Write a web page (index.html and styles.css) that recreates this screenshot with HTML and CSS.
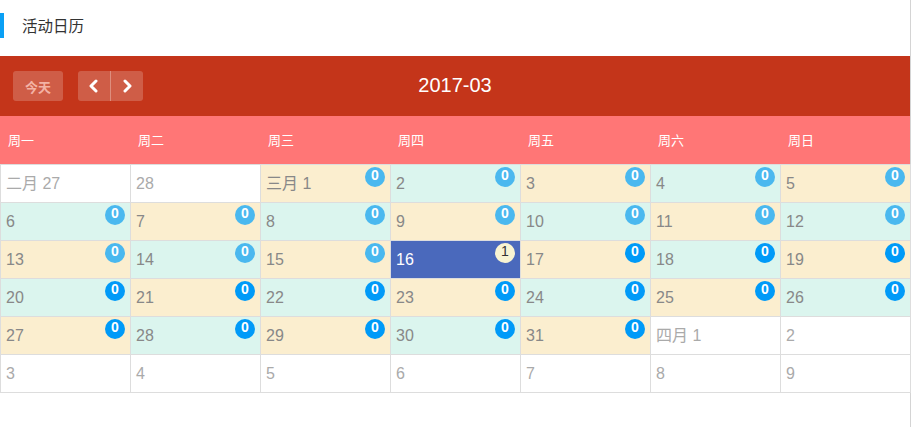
FILE: index.html
```html
<!DOCTYPE html>
<html lang="zh">
<head>
<meta charset="utf-8">
<title>活动日历</title>
<link rel="stylesheet" href="styles.css">
</head>
<body>
<div class="page">
  <div class="title"><span class="bar"></span><span class="title-text">活动日历</span></div>
  <div class="toolbar">
    <div class="tools">
      <button class="btn today">今天</button>
      <div class="btn-group">
        <button class="btn nav"><svg width="12" height="14" viewBox="0 0 12 14"><polyline points="8,2 3,7 8,12" fill="none" stroke="#fff" stroke-width="3" stroke-linecap="round" stroke-linejoin="round"/></svg></button>
        <button class="btn nav"><svg width="12" height="14" viewBox="0 0 12 14"><polyline points="4,2 9,7 4,12" fill="none" stroke="#fff" stroke-width="3" stroke-linecap="round" stroke-linejoin="round"/></svg></button>
      </div>
    </div>
    <div class="month">2017-03</div>
  </div>
  <div class="weekdays">
    <div>周一</div><div>周二</div><div>周三</div><div>周四</div><div>周五</div><div>周六</div><div>周日</div>
  </div>
  <div class="grid">
    <div class="cell other">二月 27</div>
    <div class="cell other">28</div>
    <div class="cell odd">三月 1<span class="badge light">0</span></div>
    <div class="cell even">2<span class="badge light">0</span></div>
    <div class="cell odd">3<span class="badge light">0</span></div>
    <div class="cell even">4<span class="badge light">0</span></div>
    <div class="cell odd">5<span class="badge light">0</span></div>

    <div class="cell even">6<span class="badge light">0</span></div>
    <div class="cell odd">7<span class="badge light">0</span></div>
    <div class="cell even">8<span class="badge light">0</span></div>
    <div class="cell odd">9<span class="badge light">0</span></div>
    <div class="cell even">10<span class="badge light">0</span></div>
    <div class="cell odd">11<span class="badge light">0</span></div>
    <div class="cell even">12<span class="badge light">0</span></div>

    <div class="cell odd">13<span class="badge light">0</span></div>
    <div class="cell even">14<span class="badge light">0</span></div>
    <div class="cell odd">15<span class="badge light">0</span></div>
    <div class="cell today-cell">16<span class="badge cream">1</span></div>
    <div class="cell odd">17<span class="badge dark">0</span></div>
    <div class="cell even">18<span class="badge dark">0</span></div>
    <div class="cell odd">19<span class="badge dark">0</span></div>

    <div class="cell even">20<span class="badge dark">0</span></div>
    <div class="cell odd">21<span class="badge dark">0</span></div>
    <div class="cell even">22<span class="badge dark">0</span></div>
    <div class="cell odd">23<span class="badge dark">0</span></div>
    <div class="cell even">24<span class="badge dark">0</span></div>
    <div class="cell odd">25<span class="badge dark">0</span></div>
    <div class="cell even">26<span class="badge dark">0</span></div>

    <div class="cell odd">27<span class="badge dark">0</span></div>
    <div class="cell even">28<span class="badge dark">0</span></div>
    <div class="cell odd">29<span class="badge dark">0</span></div>
    <div class="cell even">30<span class="badge dark">0</span></div>
    <div class="cell odd">31<span class="badge dark">0</span></div>
    <div class="cell other">四月 1</div>
    <div class="cell other">2</div>

    <div class="cell other">3</div>
    <div class="cell other">4</div>
    <div class="cell other">5</div>
    <div class="cell other">6</div>
    <div class="cell other">7</div>
    <div class="cell other">8</div>
    <div class="cell other">9</div>
  </div>
</div>
</body>
</html>
```

FILE: styles.css
```css
* { box-sizing: border-box; }
html, body { margin: 0; padding: 0; background: #fff; }
body {
  font-family: "Liberation Sans", "Noto Sans CJK SC", sans-serif;
  color: #333;
}
.page {
  width: 911px;
  min-height: 427px;
  border-right: 1px solid #d4d4d4;
}
.title {
  height: 56px;
  display: flex;
  align-items: flex-start;
  padding-top: 13px;
}
.bar {
  width: 4px;
  height: 25px;
  background: #0aa0f5;
}
.title-text {
  margin-left: 18px;
  font-family: "Noto Sans CJK SC", sans-serif;
  font-size: 15.5px;
  line-height: 25px;
  color: #333;
}
.toolbar {
  position: relative;
  height: 60px;
  background: #c4351a;
  display: flex;
  align-items: center;
  padding-left: 13px;
}
.tools { display: flex; gap: 15px; align-items: center; }
.btn {
  border: 0;
  margin: 0;
  padding: 0;
  height: 30px;
  background: rgba(255, 255, 255, 0.2);
  color: #f3b3a5;
  font-family: "Noto Sans CJK SC", sans-serif;
  font-weight: bold;
  font-size: 13px;
  display: flex;
  align-items: center;
  justify-content: center;
}
.today { width: 50px; border-radius: 3px; }
.btn-group { display: flex; border-radius: 3px; overflow: hidden; }
.nav { width: 32px; }
.nav + .nav { border-left: 1px solid rgba(255, 255, 255, 0.3); width: 33px; }
.month {
  position: absolute;
  left: 0;
  right: 0;
  top: 0;
  line-height: 58px;
  text-align: center;
  color: #fff;
  font-size: 20px;
  pointer-events: none;
}
.weekdays {
  height: 48px;
  background: #ff7676;
  display: grid;
  grid-template-columns: repeat(7, 130px);
  align-items: center;
  color: #fff;
  font-family: "Noto Sans CJK SC", sans-serif;
  font-size: 13px;
}
.weekdays div { padding-left: 8px; padding-bottom: 2px; }
.grid {
  width: 911px;
  display: grid;
  grid-template-columns: repeat(7, 130px);
  border-left: 1px solid #dddddd;
  border-top: 1px solid #dddddd;
}
.cell {
  position: relative;
  height: 38px;
  border-right: 1px solid #dddddd;
  border-bottom: 1px solid #dddddd;
  padding-left: 5px;
  font-size: 16px;
  line-height: 37px;
  color: #888;
  background: #fff;
}
.cell.other { color: #aaa; }
.cell.odd { background: #fbeecf; }
.cell.even { background: #dbf5ee; }
.cell.today-cell { background: #4a69bc; color: #fff; }
.badge {
  position: absolute;
  top: 2px;
  right: 5px;
  width: 20px;
  height: 20px;
  border-radius: 50%;
  color: #fff;
  font-size: 14px;
  font-weight: bold;
  line-height: 17px;
  text-align: center;
}
.badge.light { background: #4ab8ef; }
.badge.dark { background: #009af8; }
.badge.cream { background: #f8f4d2; color: #333; font-weight: normal; }
```
